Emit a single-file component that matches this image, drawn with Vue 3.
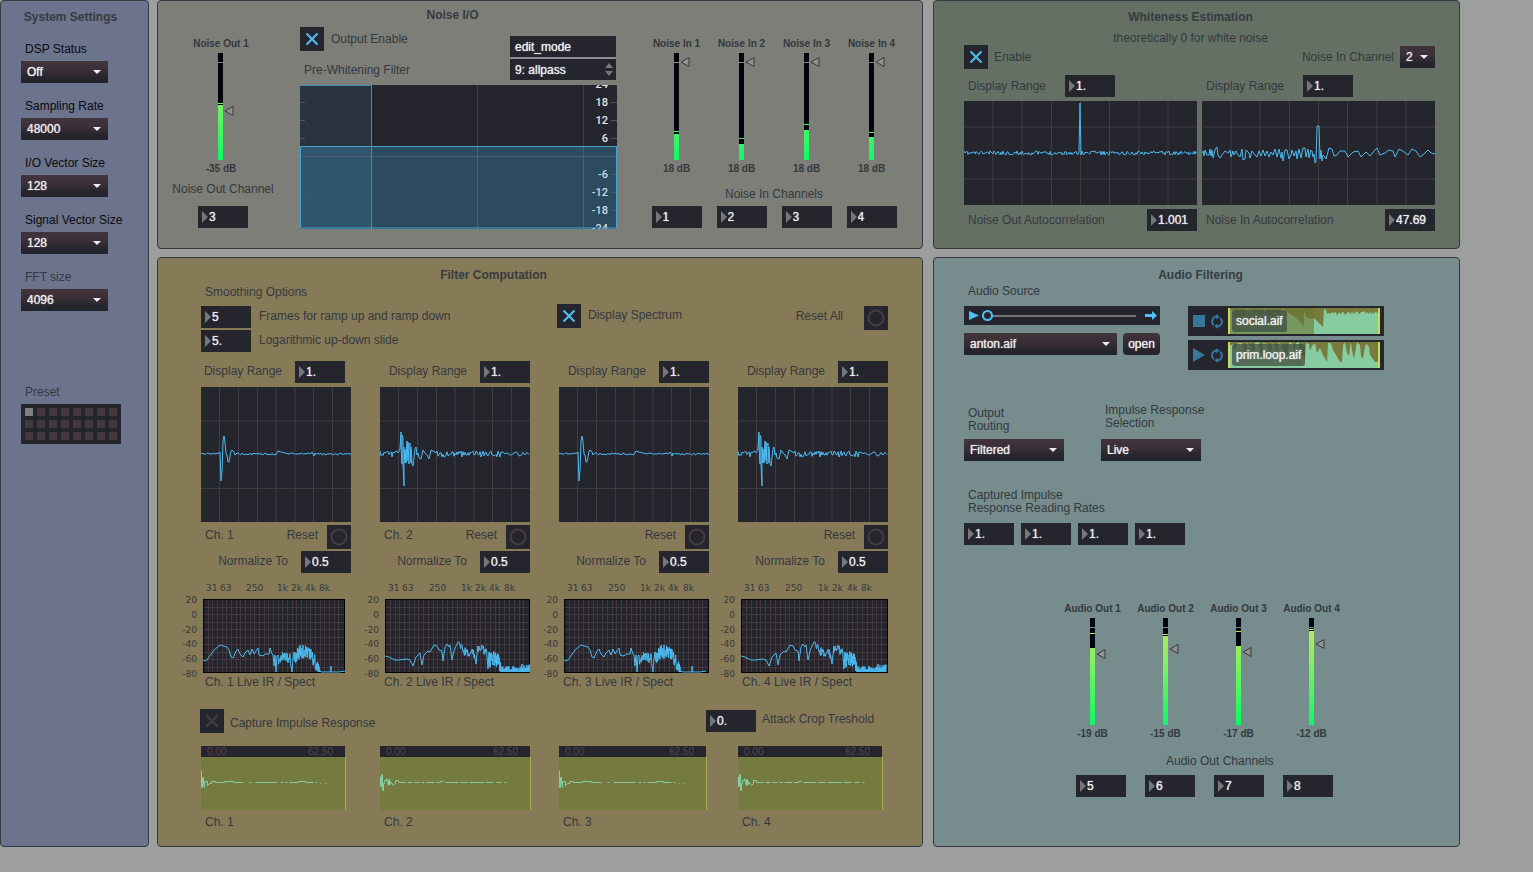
<script setup>
import { ref, reactive } from 'vue'

const settings = reactive([
  { id: 'dsp', label: 'DSP Status', value: 'Off' },
  { id: 'rate', label: 'Sampling Rate', value: '48000' },
  { id: 'iovec', label: 'I/O Vector Size', value: '128' },
  { id: 'sigvec', label: 'Signal Vector Size', value: '128' },
  { id: 'fft', label: 'FFT size', value: '4096', muted: true }
])
const preset = ref(1)

// Meter values are in pixels measured down from the top of the scale.
const outMeter = reactive({ label: 'Noise Out 1', db: '-35 dB', peak: 50, fill: 52, knob: 58 })
const inMeters = reactive([
  { label: 'Noise In 1', db: '18 dB', peak: 78, fill: 81, knob: 9 },
  { label: 'Noise In 2', db: '18 dB', peak: 85, fill: 91, knob: 9 },
  { label: 'Noise In 3', db: '18 dB', peak: 71, fill: 77, knob: 9 },
  { label: 'Noise In 4', db: '18 dB', peak: 79, fill: 84, knob: 9 }
])
const audioMeters = reactive([
  { label: 'Audio Out 1', db: '-19 dB', peak: 15, fill: 30, knob: 36 },
  { label: 'Audio Out 2', db: '-15 dB', peak: 16, fill: 18, knob: 31 },
  { label: 'Audio Out 3', db: '-17 dB', peak: 13, fill: 28, knob: 34 },
  { label: 'Audio Out 4', db: '-12 dB', peak: 11, fill: 13, knob: 26 }
])
const outChannel = ref('3')
const inChannels = reactive(['1', '2', '3', '4'])
const audioChannels = reactive(['5', '6', '7', '8'])
const rates = reactive(['1.', '1.', '1.', '1.'])

const eqLabels = [24, 18, 12, 6, -6, -12, -18, -24].map(v => ({ v, y: 71 - v * 3 }))

// Small deterministic noise source for the traces.
function noise(seed) {
  let s = seed
  return () => {
    s = (s * 16807) % 2147483647
    return s / 1073741823.5 - 1
  }
}
function line(points) {
  return 'M' + points.map(p => p[0] + ' ' + Math.round(p[1] * 10) / 10).join('L')
}
function jitter(from, to, step, base, amp, seed) {
  const rnd = noise(seed)
  const pts = []
  for (let x = from; x <= to; x += step) pts.push([x, base + rnd() * amp])
  return pts
}
function envelope(keys, step, amp, seed) {
  const rnd = noise(seed)
  const pts = []
  for (let i = 0; i < keys.length - 1; i++) {
    const [x0, y0] = keys[i]
    const [x1, y1] = keys[i + 1]
    for (let x = x0; x < x1; x += step) {
      const y = y0 + ((y1 - y0) * (x - x0)) / (x1 - x0) + rnd() * amp
      pts.push([x, Math.min(73, y)])
    }
  }
  return pts
}
// Dense bins that drop to the floor between peaks.
function comb(from, to, top, amp, seed) {
  const rnd = noise(seed)
  const pts = []
  for (let x = from; x <= to; x += 1) pts.push([x, top + rnd() * amp], [x, 73])
  return pts
}

const autoOut = line([...jitter(0, 115, 1, 52, 2, 11), [116, 2], [117, 54], ...jitter(118, 233, 1, 52, 2, 29)])
const autoIn = line([
  [0, 52], [1, 50], [2, 55], [3, 49], [5, 54], [7, 54], [8, 48], [9, 55], [10, 49], [11, 57], [13, 49], [14, 47], [15, 46],
  [16, 54], [18, 57], [20, 54], [23, 50], [26, 52], [28, 49], [29, 56], [31, 50], [32, 54], [34, 50], [36, 54], [38, 56],
  [40, 48], [41, 59], [43, 58], [44, 49], [47, 52], [48, 57], [50, 50], [53, 54], [55, 56], [57, 50], [59, 55], [61, 49],
  [63, 55], [65, 50], [67, 56], [69, 51], [71, 54], [73, 48], [75, 56], [77, 48], [79, 57], [80, 51], [81, 60], [83, 49],
  [85, 49], [87, 58], [89, 54], [90, 49], [92, 55], [94, 50], [95, 58], [97, 48], [99, 57], [101, 47], [103, 47], [104, 56],
  [106, 48], [107, 57], [109, 49], [110, 50], [111, 56], [112, 53], [113, 62], [114, 61], [115, 25], [117, 25], [118, 58],
  [119, 49], [120, 60], [121, 54], [123, 56], [124, 58], [127, 47], [130, 48], [132, 55], [135, 54], [138, 50], [143, 50],
  [146, 56], [151, 51], [156, 50], [159, 56], [164, 51], [168, 55], [172, 50], [175, 47], [178, 54], [183, 52], [187, 49],
  [191, 50], [193, 56], [197, 48], [202, 51], [206, 54], [210, 48], [214, 50], [218, 56], [222, 53], [226, 49], [229, 52], [233, 53]
])

const impulseA = line([
  ...jitter(0, 18, 1, 67, 1, 3), [19, 65], [20, 94], [21, 84], [22, 54], [23, 49], [24, 55], [25, 67], [26, 68], [27, 75],
  [28, 75], [30, 64], [31, 63], [33, 65], [34, 68], [36, 66], ...jitter(37, 75, 1, 67, 1, 17),
  [77, 64], [80, 65], [84, 66], [88, 67], ...jitter(90, 109, 1, 67, 1, 8), [111, 65], [113, 69], ...jitter(114, 150, 1, 67, 1, 44)
])
const impulseB = line([
  ...jitter(0, 18, 1, 67, 3, 6), [20, 62], [21, 45], [21, 60], [22, 77], [22, 48], [23, 51], [23, 78], [24, 99], [24, 60],
  [25, 76], [25, 62], [26, 76], [27, 54], [27, 74], [28, 55], [29, 77], [29, 58], [30, 56], [31, 76], [31, 60], [32, 77],
  [33, 79], [35, 62], [36, 60], [37, 68], [38, 66], [39, 71], [41, 72], [43, 63], [45, 66], [47, 68], [49, 72],
  [51, 63], ...jitter(53, 120, 1, 67, 3, 77), ...jitter(121, 150, 2, 67, 2, 31)
])

const spectrumA = line([
  [0, 61], [2, 62], [4, 61], [11, 51], [17, 46], [24, 48], [26, 51], [28, 58], [30, 59], [33, 52], [35, 50], [37, 55],
  [40, 58], [42, 54], [45, 51], [47, 56], [49, 50], [51, 55], [55, 49], [56, 56], [60, 57], [62, 55], [66, 55],
  [67, 49], [69, 55], [70, 56], [71, 67], [72, 56], [73, 73], [74, 57],
  ...envelope([[75, 61], [80, 57], [88, 60]], 0.5, 5, 91), [89, 73], [90, 59],
  ...envelope([[91, 60], [98, 52], [106, 55], [112, 62], [117, 74]], 0.25, 7, 19), [118, 73], [128, 73], [128, 67], [128, 73], [136, 73], [142, 72]
])
const spectrumB = line([
  [0, 57], [4, 58], [10, 61], [14, 61], [22, 60], [25, 61], [28, 67], [31, 58], [35, 54], [37, 66], [39, 56], [43, 52],
  [45, 53], [49, 46], [52, 47], [54, 51], [57, 52], [58, 62], [60, 48], [62, 45], [64, 48], [65, 46], [67, 61],
  [69, 52], [71, 47], [73, 43], ...envelope([[74, 48], [82, 54], [90, 55]], 0.5, 5, 23), [91, 65],
  ...envelope([[93, 52], [98, 49], [102, 56]], 0.5, 5, 12), [103, 70],
  ...envelope([[104, 61], [112, 60], [116, 68]], 0.25, 8, 45),
  ...comb(116, 136, 69, 2, 65), ...comb(137, 145, 67, 2, 15)
])

const captureA = 'M0 14V31H1V21H2V27L3 31V25H6V29L8 27H10V25H14V26H23V25H32V26H42M48 26H50M54 26H76M79 26H82M84 26H86M88 26H97V25H104V26H112M114 26H116M119 27H120M124 27H125'
const captureB = 'M0 20V30H1V18H2V34H3V27H4V24H6V22L8 29V23H9V28H10V25L13 29L15 27V24H18V26H25M27 26H32M34 26H39M41 26H44M46 26H54M56 26H60V25H63M65 26H78M80 26H87M89 26H104M106 25V26H113M116 26H121M124 26H126'

const channels = reactive([
  { n: 1, range: '1.', norm: '0.5', named: true, impulse: impulseA, spectrum: spectrumA, capture: captureA, plot: 142, clip: 144 },
  { n: 2, range: '1.', norm: '0.5', named: true, impulse: impulseB, spectrum: spectrumB, capture: captureB, plot: 145, clip: 150 },
  { n: 3, range: '1.', norm: '0.5', named: false, impulse: impulseA, spectrum: spectrumA, capture: captureA, plot: 145, clip: 147 },
  { n: 4, range: '1.', norm: '0.5', named: false, impulse: impulseB, spectrum: spectrumB, capture: captureB, plot: 147, clip: 144 }
])
const freqs = [[3, '31'], [17, '63'], [43, '250'], [75, '1k'], [89, '2k'], [103, '4k'], [117, '8k']]
const levels = ['20', '0', '-20', '-40', '-60', '-80']

function skyline(points) {
  return 'M2 26L' + points.map(p => p.join(' ')).join('L') + 'L150 26Z'
}
const socialTop = (() => {
  const r = noise(37)
  const pts = []
  for (let x = 2; x <= 56; x += 2) pts.push([x, x % 18 < 3 ? 1 : Math.round(6 + r() * 4)])
  pts.push([58, 2], [60, 5], [64, 7], [70, 12], [76, 18], [76, 2], [78, 9], [83, 11], [86, 10], [90, 14], [95, 19], [96, 1], [98, 2], [99, 6])
  for (let x = 101; x <= 148; x += 1) pts.push([x, Math.round(5 + r() * 2)])
  pts.push([150, 6])
  return skyline(pts)
})()
const primTop = skyline([
  [2, 4], [5, 2], [7, 8], [10, 1], [14, 1], [16, 13], [18, 14], [19, 1], [23, 4], [24, 12], [26, 14], [27, 1], [31, 0], [32, 10], [34, 16],
  [35, 1], [39, 2], [41, 13], [43, 18], [44, 1], [47, 3], [49, 12], [50, 1], [54, 2], [56, 14], [59, 18], [61, 0], [65, 2], [66, 12],
  [68, 1], [71, 0], [72, 12], [75, 14], [77, 18], [78, 1], [81, 2], [82, 9], [84, 4], [87, 1], [89, 11], [92, 6], [95, 13], [99, 20],
  [100, 1], [103, 1], [105, 8], [108, 13], [112, 20], [114, 20], [115, 3], [117, 0], [119, 11], [121, 14], [122, 4], [123, 0], [124, 9], [126, 17],
  [129, 0], [132, 3], [133, 14], [135, 17], [137, 4], [139, 2], [141, 5], [142, 13], [145, 17], [147, 20], [150, 20]
])
const players = [
  { name: 'social.aif', playing: true, wave: socialTop },
  { name: 'prim.loop.aif', playing: false, wave: primTop }
]

const outputEnable = ref(true)
const whitenessEnable = ref(true)
const showSpectrum = ref(true)
const capture = ref(false)
const rampFrames = ref('5')
const slide = ref('5.')
const cropLevel = ref('0.')
const rangeOut = ref('1.')
const rangeIn = ref('1.')
const corrOut = ref('1.001')
const corrIn = ref('47.69')
const position = ref(0)
</script>

<template>
  <div class="page">
    <aside class="panel system">
      <h2>System Settings</h2>
      <div class="fields">
        <div v-for="s in settings" :key="s.id" class="field">
          <label :for="s.id" :class="{ strong: !s.muted }">{{ s.label }}</label>
          <span class="pick">
            <select :id="s.id" v-model="s.value"><option>{{ s.value }}</option></select>
            <svg width="8" height="4" viewBox="0 0 8 4"><path d="M0 0H8L4 4Z" /></svg>
          </span>
        </div>
      </div>
      <p class="label preset-label">Preset</p>
      <div class="presets">
        <button v-for="i in 24" :key="i" type="button" :class="{ on: i === preset }" :aria-label="'Preset ' + i" @click="preset = i"></button>
      </div>
    </aside>

    <section class="panel noise">
      <div class="noise-out">
        <div class="meter">
          <span class="tiny">{{ outMeter.label }}</span>
          <span class="scale">
            <svg width="29" height="107" viewBox="0 0 29 107">
              <defs>
                <linearGradient id="levelFill" gradientUnits="userSpaceOnUse" x1="0" y1="0" x2="0" y2="107">
                  <stop offset="0" stop-color="#cbe758" />
                  <stop offset="0.5" stop-color="#6ff45f" />
                  <stop offset="1" stop-color="#0cfb63" />
                </linearGradient>
              </defs>
              <path d="M12 0H17V107H12Z" fill="#00040f" />
              <path d="M12 9H17V10H12Z" fill="#7f807f" />
              <rect x="12" :y="outMeter.peak" width="5" height="1" fill="url(#levelFill)" />
              <rect x="12" :y="outMeter.fill" width="5" :height="107 - outMeter.fill" fill="url(#levelFill)" />
              <path :transform="`translate(18.5 ${outMeter.knob})`" d="M0.5 0L8.5 -4.5V4.5Z" class="knob" />
            </svg>
            <input v-model.number="outMeter.knob" type="range" min="0" max="107" :aria-label="outMeter.label" />
          </span>
          <span class="tiny">{{ outMeter.db }}</span>
        </div>
        <label for="outch" class="label">Noise Out Channel</label>
        <span class="num"><input id="outch" v-model="outChannel" /></span>
      </div>

      <div class="eq">
        <h2>Noise I/O</h2>
        <div class="eq-head">
          <div>
            <div class="line">
              <span class="tick">
                <input id="outen" v-model="outputEnable" type="checkbox" />
                <svg width="14" height="14" viewBox="0 0 14 14"><path d="M1.5 1.5L12.5 12.5M12.5 1.5L1.5 12.5" /></svg>
              </span>
              <label for="outen" class="label">Output Enable</label>
            </div>
            <p class="label eq-name">Pre-Whitening Filter</p>
          </div>
          <div class="eq-menu">
            <button type="button">edit_mode</button>
            <span class="pick flat">
              <select aria-label="Filter type"><option>9: allpass</option></select>
              <svg width="8" height="13" viewBox="0 0 8 13"><path d="M0 5L4 0L8 5ZM0 8L4 13L8 8Z" /></svg>
            </span>
          </div>
        </div>
        <svg class="eq-plot" width="317" height="144" viewBox="0 0 317 144">
          <rect width="317" height="144" fill="#25252e" />
          <path d="M177.5 0V61M283.5 0V61" stroke="#453a3f" />
          <rect width="71" height="61" fill="#28333f" />
          <rect y="61" width="317" height="83" fill="#2d4b5f" />
          <rect y="61" width="71" height="83" fill="#2f566c" />
          <path d="M0 71.5H317M177.5 61V144M283.5 61V144" stroke="#4e6072" />
          <g v-for="l in eqLabels" :key="l.v">
            <path :d="`M0 ${l.y + 0.5}H5M311 ${l.y + 0.5}H317`" stroke="#54535c" />
            <text x="308" :y="l.y + 4" text-anchor="end" :fill="l.v > 0 ? '#e6e6e8' : '#c9dbe6'">{{ l.v }}</text>
          </g>
          <path d="M71.5 0V144M0 0.5H71" stroke="#3f8db5" fill="none" />
          <path d="M0.5 61.5H316.5V143H0.5Z" stroke="#45a3cd" fill="none" />
        </svg>
      </div>

      <div class="noise-in">
        <div class="quad">
          <div v-for="m in inMeters" :key="m.label" class="meter">
            <span class="tiny">{{ m.label }}</span>
            <span class="scale">
              <svg width="29" height="107" viewBox="0 0 29 107">
                <path d="M12 0H17V107H12Z" fill="#00040f" />
                <path d="M12 9H17V10H12Z" fill="#8c8c88" />
                <rect x="12" :y="m.peak" width="5" height="1" fill="url(#levelFill)" />
                <rect x="12" :y="m.fill" width="5" :height="107 - m.fill" fill="url(#levelFill)" />
                <path :transform="`translate(18.5 ${m.knob})`" d="M0.5 0L8.5 -4.5V4.5Z" class="knob" />
              </svg>
              <input v-model.number="m.knob" type="range" min="0" max="107" :aria-label="m.label" />
            </span>
            <span class="tiny">{{ m.db }}</span>
          </div>
        </div>
        <p class="label">Noise In Channels</p>
        <div class="quad">
          <span v-for="(c, i) in inChannels" :key="i" class="num"><input v-model="inChannels[i]" :aria-label="'Noise In channel ' + (i + 1)" /></span>
        </div>
      </div>
    </section>

    <section class="panel white right">
      <h2>Whiteness Estimation</h2>
      <p class="label theory">theoretically 0 for white noise</p>
      <div class="line top">
        <span class="tick">
          <input id="wen" v-model="whitenessEnable" type="checkbox" />
          <svg width="14" height="14" viewBox="0 0 14 14"><path d="M1.5 1.5L12.5 12.5M12.5 1.5L1.5 12.5" /></svg>
        </span>
        <label for="wen" class="label">Enable</label>
        <label for="nic" class="label push">Noise In Channel</label>
        <span class="pick small">
          <select id="nic"><option>2</option></select>
          <svg width="8" height="4" viewBox="0 0 8 4"><path d="M0 0H8L4 4Z" /></svg>
        </span>
      </div>
      <div class="corr">
        <div>
          <div class="line range">
            <label for="ro" class="label">Display Range</label>
            <span class="num"><input id="ro" v-model="rangeOut" /></span>
          </div>
          <svg class="scope" width="233" height="104" viewBox="0 0 233 104">
            <path class="grid" d="M29 0V104M58 0V104M87.5 0V104M116.5 0V104M145.5 0V104M175 0V104M204 0V104M0 26H233M0 78H233" />
            <path class="trace" :d="autoOut" />
          </svg>
          <div class="line result">
            <label for="co" class="label">Noise Out Autocorrelation</label>
            <span class="num"><input id="co" v-model="corrOut" /></span>
          </div>
        </div>
        <div>
          <div class="line range">
            <label for="ri" class="label">Display Range</label>
            <span class="num"><input id="ri" v-model="rangeIn" /></span>
          </div>
          <svg class="scope" width="233" height="104" viewBox="0 0 233 104">
            <path class="grid" d="M29 0V104M58 0V104M87.5 0V104M116.5 0V104M145.5 0V104M175 0V104M204 0V104M0 26H233M0 78H233" />
            <path class="trace" :d="autoIn" />
          </svg>
          <div class="line result">
            <label for="ci" class="label">Noise In Autocorrelation</label>
            <span class="num"><input id="ci" v-model="corrIn" /></span>
          </div>
        </div>
      </div>
    </section>

    <section class="panel filter">
      <h2>Filter Computation</h2>
      <p class="label smooth">Smoothing Options</p>
      <div class="options">
        <div class="smoothing">
          <div class="line">
            <span class="num"><input id="ramp" v-model="rampFrames" /></span>
            <label for="ramp" class="label">Frames for ramp up and ramp down</label>
          </div>
          <div class="line">
            <span class="num"><input id="slide" v-model="slide" /></span>
            <label for="slide" class="label">Logarithmic up-down slide</label>
          </div>
        </div>
        <div class="line">
          <span class="tick">
            <input id="spec" v-model="showSpectrum" type="checkbox" />
            <svg width="14" height="14" viewBox="0 0 14 14"><path d="M1.5 1.5L12.5 12.5M12.5 1.5L1.5 12.5" /></svg>
          </span>
          <label for="spec" class="label">Display Spectrum</label>
        </div>
        <div class="line reset-all">
          <span class="label">Reset All</span>
          <button type="button" class="bang" aria-label="Reset All"><svg width="24" height="24" viewBox="0 0 24 24"><circle cx="12" cy="12" r="7.5" /></svg></button>
        </div>
      </div>

      <div class="channels">
        <div v-for="c in channels" :key="c.n" class="channel">
          <div class="line end inset">
            <label :for="'dr' + c.n" class="label">Display Range</label>
            <span class="num"><input :id="'dr' + c.n" v-model="c.range" /></span>
          </div>
          <svg class="scope" width="150" height="135" viewBox="0 0 150 135">
            <path class="grid" d="M18.5 0V135M37.5 0V135M56.5 0V135M75 0V135M94 0V135M112.5 0V135M131.5 0V135M0 34H150M0 101.5H150" />
            <path class="trace" :d="c.impulse" />
          </svg>
          <div class="line end reset">
            <span v-if="c.named" class="label name">Ch. {{ c.n }}</span>
            <span class="label">Reset</span>
            <button type="button" class="bang" :aria-label="'Reset channel ' + c.n"><svg width="24" height="24" viewBox="0 0 24 24"><circle cx="12" cy="12" r="7.5" /></svg></button>
          </div>
          <div class="line end">
            <label :for="'nz' + c.n" class="label">Normalize To</label>
            <span class="num"><input :id="'nz' + c.n" v-model="c.norm" /></span>
          </div>
          <div class="spectrum inset">
            <svg :width="c.plot + 22" height="98" :viewBox="`-22 -16 ${c.plot + 22} 98`">
              <text v-for="f in freqs" :key="f[1]" :x="Math.round(f[0] * c.plot / 143)" y="-8">{{ f[1] }}</text>
              <text v-for="(l, i) in levels" :key="l" x="-6" :y="4 + Math.round(i * 14.8)" text-anchor="end">{{ l }}</text>
              <rect x="0.5" y="0.5" :width="c.plot - 1" height="73" fill="#25252e" stroke="#000" />
              <path v-for="i in 29" :key="'v' + i" class="grid" :d="`M${Math.round(i * c.plot / 30.4) + 0.5} 1V73`" />
              <path v-for="i in 9" :key="'h' + i" class="grid" :d="`M1 ${Math.round(i * 7.5) + 0.5}H${c.plot - 1}`" />
              <path class="trace" :d="c.spectrum" />
            </svg>
          </div>
          <p class="label caption">Ch. {{ c.n }} Live IR / Spect</p>
        </div>
      </div>

      <div class="capture">
        <span class="tick">
          <input id="cap" v-model="capture" type="checkbox" />
          <svg width="14" height="14" viewBox="0 0 14 14"><path d="M1.5 1.5L12.5 12.5M12.5 1.5L1.5 12.5" /></svg>
        </span>
        <label for="cap" class="label">Capture Impulse Response</label>
        <span class="num push"><input id="crop" v-model="cropLevel" /></span>
        <label for="crop" class="label crop">Attack Crop Treshold</label>
      </div>

      <div class="clips">
        <div v-for="c in channels" :key="c.n">
          <svg class="clip" :width="c.clip + 1" height="64" :viewBox="`0 0 ${c.clip + 1} 64`">
            <rect :width="c.clip" height="11" fill="#25252e" />
            <text x="6" y="9">0.00</text>
            <text :x="c.clip - 12" y="9" text-anchor="end">62.50</text>
            <rect y="11" :width="c.clip" height="53" fill="#757b3e" />
            <rect :x="c.clip" y="11" width="1" height="53" fill="#aaab4c" />
            <path :d="`M0 24H5M0 50H5M${c.clip - 5} 24H${c.clip}M${c.clip - 5} 50H${c.clip}`" stroke="#80793f" stroke-width="2" />
            <path :d="c.capture" transform="translate(0.5 10.5)" fill="none" stroke="#87cba0" />
          </svg>
          <p class="label">Ch. {{ c.n }}</p>
        </div>
      </div>
    </section>

    <section class="panel audio right">
      <h2>Audio Filtering</h2>
      <p class="label source">Audio Source</p>
      <div class="files">
        <div class="deck">
          <div class="transport">
            <button type="button" aria-label="Play"><svg width="10" height="9" viewBox="0 0 10 9"><path d="M0 0L10 4.5L0 9Z" /></svg></button>
            <input v-model="position" type="range" min="0" max="100" aria-label="Position" />
            <button type="button" aria-label="Next"><svg width="12" height="9" viewBox="0 0 12 9"><path d="M0 3H7V0L12 4.5L7 9V6H0Z" /></svg></button>
          </div>
          <div class="open">
            <span class="pick">
              <select aria-label="Audio file"><option>anton.aif</option></select>
              <svg width="8" height="4" viewBox="0 0 8 4"><path d="M0 0H8L4 4Z" /></svg>
            </span>
            <button type="button">open</button>
          </div>
        </div>
        <div class="players">
          <div v-for="p in players" :key="p.name" class="player">
            <button type="button" :aria-label="(p.playing ? 'Stop ' : 'Play ') + p.name">
              <svg width="12" height="14" viewBox="0 0 12 14"><path :d="p.playing ? 'M0 1H12V13H0Z' : 'M0 0L12 7L0 14Z'" /></svg>
            </button>
            <button type="button" :aria-label="'Loop ' + p.name">
              <svg class="loop" width="12" height="15" viewBox="0 0 12 15">
                <path class="arc" d="M3 11.3A5 5 0 0 1 2.6 3.7Q4 2.6 6 2.6M9 3.7A5 5 0 0 1 9.4 11.3Q8 12.4 6 12.4" />
                <path d="M5.3 0L8.6 2.7L5.3 5.6ZM6.7 9.4L3.4 12.3L6.7 15Z" />
              </svg>
            </button>
            <span class="wave">
              <svg width="152" height="26" viewBox="0 0 152 26">
                <rect width="152" height="26" fill="#787b3b" />
                <path :d="p.wave" fill="#87cba0" />
                <path v-if="p.playing" d="M2 0H86V26H2Z" fill="#6a7634" fill-opacity="0.6" />
                <path d="M0 0H2V26H0ZM150 0H152V26H150Z" fill="#cdd94f" />
              </svg>
              <span class="tag">{{ p.name }}</span>
            </span>
          </div>
        </div>
      </div>

      <div class="routing">
        <div class="field">
          <label for="route">Output<br />Routing</label>
          <span class="pick">
            <select id="route"><option>Filtered</option></select>
            <svg width="8" height="4" viewBox="0 0 8 4"><path d="M0 0H8L4 4Z" /></svg>
          </span>
        </div>
        <div class="field higher">
          <label for="irsel">Impulse Response<br />Selection</label>
          <span class="pick">
            <select id="irsel"><option>Live</option></select>
            <svg width="8" height="4" viewBox="0 0 8 4"><path d="M0 0H8L4 4Z" /></svg>
          </span>
        </div>
      </div>

      <p class="label two">Captured Impulse<br />Response Reading Rates</p>
      <div class="rates">
        <span v-for="(r, i) in rates" :key="i" class="num"><input v-model="rates[i]" :aria-label="'Reading rate ' + (i + 1)" /></span>
      </div>

      <div class="outs">
        <div v-for="m in audioMeters" :key="m.label" class="meter">
          <span class="tiny">{{ m.label }}</span>
          <span class="scale">
            <svg width="29" height="107" viewBox="0 0 29 107">
              <path d="M12 0H17V107H12Z" fill="#00040f" />
              <path d="M12 9H17V10H12Z" fill="#768c8d" />
              <rect x="12" :y="m.peak" width="5" height="1" fill="url(#levelFill)" />
              <rect x="12" :y="m.fill" width="5" :height="107 - m.fill" fill="url(#levelFill)" />
              <path :transform="`translate(18.5 ${m.knob})`" d="M0.5 0L8.5 -4.5V4.5Z" class="knob" />
            </svg>
            <input v-model.number="m.knob" type="range" min="0" max="107" :aria-label="m.label" />
          </span>
          <span class="tiny">{{ m.db }}</span>
        </div>
      </div>
      <p class="label outs-label">Audio Out Channels</p>
      <div class="outs-num">
        <span v-for="(c, i) in audioChannels" :key="i" class="num"><input v-model="audioChannels[i]" :aria-label="'Audio Out channel ' + (i + 1)" /></span>
      </div>
    </section>
  </div>
</template>

<style>
html,
body {
  background: #9c9f9d;
}
</style>

<style scoped>
.page {
  display: grid;
  grid-template-columns: 149px minmax(766px, 766fr) minmax(529px, 529fr);
  grid-template-rows: auto auto;
  gap: 8px;
  padding-right: 73px;
  font-family: "Liberation Sans", Arial, sans-serif;
  font-size: 12px;
  line-height: 14px;
  color: #34393f;
}
.page * {
  box-sizing: border-box;
}
h2,
p {
  margin: 0;
  font-size: 12px;
  line-height: 14px;
}
h2 {
  text-align: center;
  color: #363b41;
}
svg {
  display: block;
}
button,
input,
select {
  font: inherit;
  margin: 0;
  padding: 0;
  border: 0;
  border-radius: 0;
  background: none;
  color: inherit;
}
.panel {
  border: 1px solid #353a40;
  border-radius: 4px;
}
.right {
  margin-left: 2px;
}
.label {
  white-space: nowrap;
}
.line {
  display: flex;
  align-items: center;
}
.push {
  margin-left: auto;
}

/* Number boxes */
.num {
  display: flex;
  align-items: center;
  flex: none;
  width: 50px;
  height: 22px;
  padding-left: 4px;
  background: #25252e;
}
.num::before {
  content: "";
  border: 6px solid transparent;
  border-left-color: #77767b;
  border-right: 0;
}
.num input {
  width: 38px;
  height: 22px;
  padding-left: 1px;
  color: #ececee;
  text-shadow: 0 0 1px #ececee;
  outline: none;
}

/* Menus */
.pick {
  display: grid;
  align-items: center;
  height: 22px;
  background: linear-gradient(#42343b, #3b2f37 40%, #27262e 75%, #23232b);
}
.pick select,
.pick svg {
  grid-area: 1 / 1;
}
.pick select {
  appearance: none;
  width: 100%;
  height: 22px;
  padding-left: 6px;
  color: #ececee;
  text-shadow: 0 0 1px #ececee;
}
.pick svg {
  justify-self: end;
  margin-right: 7px;
  fill: #ececee;
  pointer-events: none;
}
.field {
  display: flex;
  flex-direction: column;
}
.field label {
  padding-left: 4px;
  margin-bottom: 5px;
  white-space: nowrap;
}
.field .strong {
  color: #0a0b0e;
}

/* Toggles and bangs */
.tick {
  display: grid;
  place-items: center;
  flex: none;
  width: 24px;
  height: 24px;
  background: #25252e;
}
.tick input,
.tick svg {
  grid-area: 1 / 1;
}
.tick input {
  appearance: none;
  width: 24px;
  height: 24px;
}
.tick svg {
  stroke: #493b40;
  stroke-width: 2;
  pointer-events: none;
}
.tick input:checked + svg {
  stroke: #4ec0f5;
}
.bang {
  flex: none;
  background: #25252e;
}
.bang circle {
  fill: none;
  stroke: #493b40;
  stroke-width: 2;
}

/* Meters */
.meter {
  display: flex;
  flex-direction: column;
  align-items: center;
  gap: 3px;
}
.tiny {
  font-size: 10px;
  line-height: 12px;
  font-weight: bold;
  white-space: nowrap;
}
.scale {
  display: grid;
}
.scale svg,
.scale input {
  grid-area: 1 / 1;
}
.scale input {
  width: 29px;
  height: 107px;
  writing-mode: vertical-lr;
  opacity: 0;
}
.knob {
  fill: #93918f;
  stroke: #36393d;
}

/* Plots */
.scope {
  background: #25252e;
}
.grid {
  fill: none;
  stroke: #44393e;
}
.trace {
  fill: none;
  stroke: #4bbaf0;
}

/* System settings */
.system {
  grid-row: 1 / 3;
  padding: 9px 20px 0;
  background: #6c738d;
}
.system h2 {
  margin-right: 8px;
  white-space: nowrap;
}
.fields {
  display: grid;
  gap: 16px;
  margin-top: 18px;
}
.fields .pick {
  width: 87px;
}
.preset-label {
  margin-top: 74px;
  padding-left: 4px;
}
.presets {
  display: grid;
  grid-template-columns: repeat(8, 8px);
  gap: 4px;
  width: 100px;
  margin-top: 5px;
  padding: 4px;
  background: #25252e;
}
.presets button {
  height: 8px;
  background: #45393f;
}
.presets .on {
  background: #7e7f84;
}

/* Noise I/O */
.noise {
  display: flex;
  align-items: flex-start;
  padding-bottom: 19px;
  background: #7d7e77;
}
.noise-out {
  display: flex;
  flex-direction: column;
  align-items: center;
  width: 130px;
  margin-right: 12px;
  padding-top: 37px;
}
.noise-out .meter {
  margin-right: 4px;
}
.noise-out .label {
  margin: 7px 0 10px;
}
.eq {
  width: 317px;
  padding-top: 7px;
}
.eq h2 {
  margin-right: 12px;
}
.eq-head {
  display: flex;
  justify-content: space-between;
  padding: 5px 1px 5px 0;
}
.eq-head .line {
  gap: 7px;
}
.eq-name {
  margin-top: 12px;
  padding-left: 4px;
}
.eq-menu {
  display: grid;
  gap: 2px;
  width: 106px;
  margin-top: 9px;
  background: #8f8c96;
}
.eq-menu button,
.pick.flat,
.pick.flat select {
  height: 21px;
}
.eq-menu button {
  padding-left: 5px;
  text-align: left;
  background: #25252e;
  color: #ececee;
  text-shadow: 0 0 1px #ececee;
}
.pick.flat {
  background: #25252e;
}
.pick.flat select {
  padding-left: 5px;
}
.pick.flat svg {
  margin-right: 3px;
  fill: #77767b;
}
.eq-plot text {
  font-size: 11px;
  font-family: Roboto, sans-serif;
  font-weight: 500;
}
.noise-in {
  margin-left: 27px;
  padding-top: 37px;
}
.quad {
  display: grid;
  grid-template-columns: repeat(4, 65px);
  justify-items: center;
}
.noise-in .label {
  margin: 12px 0 5px;
  text-align: center;
}

/* Whiteness estimation */
.white {
  padding: 9px 24px 17px 30px;
  background: #657064;
}
.white h2,
.theory {
  margin-right: 18px;
  text-align: center;
}
.theory {
  margin-top: 7px;
}
.white .top {
  gap: 6px;
}
.pick.small {
  width: 35px;
}
.corr {
  display: flex;
  justify-content: space-between;
}
.range {
  margin: 6px 0 4px;
}
.range .label {
  width: 101px;
}
.range .label,
.result .label {
  padding-left: 4px;
}
.result {
  justify-content: space-between;
  margin-top: 4px;
}

/* Filter computation */
.filter {
  padding: 10px 24px 17px 23px;
  background: #877a57;
}
.filter h2 {
  margin-right: 92px;
}
.smooth {
  margin-top: 3px;
  padding-left: 24px;
}
.options {
  display: flex;
  align-items: flex-start;
  margin: 5px 0 9px 20px;
  width: 687px;
}
.smoothing {
  display: grid;
  gap: 2px;
  width: 356px;
  padding-top: 2px;
}
.smoothing .line {
  gap: 8px;
}
.options .line > .label {
  margin-bottom: 2px;
}
.options > .line {
  gap: 7px;
}
.options > .reset-all {
  gap: 21px;
  margin: 2px 0 0 auto;
}
.options > .reset-all .label {
  margin-bottom: 4px;
}
.channels,
.clips {
  display: grid;
  grid-template-columns: repeat(4, 170px);
  gap: 9px;
}
.channel {
  padding-left: 20px;
}
.end {
  justify-content: flex-end;
  gap: 13px;
}
.end .label {
  margin-bottom: 2px;
}
.channel:first-child .inset {
  padding-right: 6px;
}
.channel .scope {
  margin: 4px 0 3px;
}
.channel .reset {
  gap: 9px;
  margin-bottom: 2px;
}
.channel .reset .label {
  margin-bottom: 4px;
}
.channel .name {
  margin-right: auto;
  padding-left: 4px;
}
.spectrum {
  display: flex;
  justify-content: flex-end;
  margin: 10px 0 0 -20px;
}
.spectrum text {
  font-family: "DejaVu Sans", sans-serif;
  font-size: 9px;
  fill: #34393f;
}
.caption {
  margin-top: -6px;
  padding-left: 4px;
}
.capture {
  display: flex;
  align-items: center;
  gap: 6px;
  width: 687px;
  margin: 20px 0 13px 19px;
}
.capture .label {
  margin-top: 4px;
}
.capture .crop {
  width: 125px;
  margin: 0 0 4px;
}
.clips > div {
  padding-left: 20px;
}
.clip text {
  font-size: 10px;
  fill: #56474c;
}
.clips .label {
  margin-top: 5px;
  padding-left: 4px;
}

/* Audio filtering */
.audio {
  padding: 10px 24px 49px 30px;
  background: #768c8d;
}
.audio h2 {
  margin-left: 2px;
}
.source {
  margin-top: 2px;
  padding-left: 4px;
}
.files {
  display: flex;
  gap: 28px;
  margin-top: 8px;
}
.deck,
.players {
  width: 196px;
}
.transport {
  display: flex;
  align-items: center;
  height: 19px;
  padding: 0 3px 0 5px;
  background: #25252e;
}
.transport svg {
  fill: #4ec0f5;
}
.transport input {
  appearance: none;
  flex: 1;
  min-width: 0;
  height: 11px;
  margin: 0 9px 0 3px;
  background: linear-gradient(#77767b, #77767b) center / 100% 2px no-repeat;
}
.transport input::-webkit-slider-thumb {
  appearance: none;
  width: 11px;
  height: 11px;
  border: 2px solid #4ec0f5;
  border-radius: 50%;
  background: #25252e;
}
.open {
  display: flex;
  gap: 6px;
  margin-top: 8px;
}
.open .pick {
  flex: 1;
}
.open button {
  width: 37px;
  height: 22px;
  border-radius: 4px;
  background: linear-gradient(#42343b, #2d2930 60%, #23232b);
  color: #ececee;
  text-shadow: 0 0 1px #ececee;
}
.players {
  display: grid;
  gap: 4px;
}
.player {
  display: flex;
  align-items: center;
  justify-content: space-between;
  height: 30px;
  padding: 0 4px 0 5px;
  background: #25252e;
}
.player button svg {
  fill: #37779b;
}
.loop .arc {
  fill: none;
  stroke: #37779b;
  stroke-width: 2;
}
.wave {
  position: relative;
}
.tag {
  position: absolute;
  top: 2px;
  left: 4px;
  padding: 0 4px;
  border-radius: 3px;
  line-height: 22px;
  background: rgba(66, 78, 66, 0.75);
  color: #f0f0f0;
  text-shadow: 0 0 1px #f0f0f0;
}
.routing {
  display: flex;
  align-items: flex-end;
  gap: 37px;
  margin-top: 34px;
}
.routing .field {
  width: 100px;
}
.routing label,
.two {
  line-height: 13px;
}
.routing label {
  margin-bottom: 6px;
}
.routing .higher label {
  margin-bottom: 9px;
}
.two {
  margin-top: 28px;
  padding-left: 4px;
}
.rates {
  display: flex;
  gap: 7px;
  margin-top: 8px;
}
.outs {
  display: grid;
  grid-template-columns: repeat(4, 73px);
  margin: 58px 0 0 92px;
}
.outs-label {
  margin: 14px 0 7px 202px;
}
.outs-num {
  display: flex;
  gap: 19px;
  margin-left: 112px;
}
</style>
